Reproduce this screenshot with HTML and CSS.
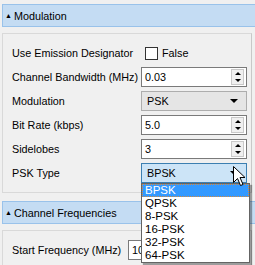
FILE: index.html
```html
<!DOCTYPE html>
<html lang="en">
<head>
  <meta charset="UTF-8">
  <title>Property Grid</title>
  <link rel="stylesheet" href="styles.css">
</head>
<body>
  <div class="grid">
    <div class="section-head"><span class="arrow">&#9650;</span>Modulation</div>
    <div class="section-body">
      <div class="row">
        <span class="label">Use Emission Designator</span>
        <div class="field check-field"><span class="check"></span>False</div>
      </div>
      <div class="row">
        <span class="label">Channel Bandwidth (MHz)</span>
        <div class="field spin"><span class="value">0.03</span><span class="spin-btn"><i class="up"></i><i class="down"></i></span></div>
      </div>
      <div class="row">
        <span class="label">Modulation</span>
        <div class="field combo"><span class="value">PSK</span><i class="down"></i></div>
      </div>
      <div class="row">
        <span class="label">Bit Rate (kbps)</span>
        <div class="field spin"><span class="value">5.0</span><span class="spin-btn"><i class="up"></i><i class="down"></i></span></div>
      </div>
      <div class="row">
        <span class="label">Sidelobes</span>
        <div class="field spin"><span class="value">3</span><span class="spin-btn"><i class="up"></i><i class="down"></i></span></div>
      </div>
      <div class="row">
        <span class="label">PSK Type</span>
        <div class="field combo active"><span class="value">BPSK</span><i class="down"></i>
          <ul class="popup">
            <li class="selected">BPSK</li>
            <li>QPSK</li>
            <li>8-PSK</li>
            <li>16-PSK</li>
            <li>32-PSK</li>
            <li>64-PSK</li>
          </ul>
          <svg class="cursor" width="13" height="20" viewBox="0 0 13 20">
            <path d="M0.5 0.5 L0.5 16.5 L4.5 12.5 L7.5 19.5 L10 18.5 L7 11.5 L12 11.5 Z" fill="#fff" stroke="#000" stroke-width="1"/>
          </svg>
        </div>
      </div>
    </div>
    <div class="section-head"><span class="arrow">&#9650;</span>Channel Frequencies</div>
    <div class="section-body">
      <div class="row">
        <span class="label short">Start Frequency (MHz)</span>
        <div class="field spin"><span class="value">10</span><span class="spin-btn"><i class="up"></i><i class="down"></i></span></div>
      </div>
    </div>
  </div>
</body>
</html>
```

FILE: styles.css
```css
body {
  margin: 0;
  background: #f0f0f0;
  font-family: "Liberation Sans", Arial, sans-serif;
  font-size: 10.8px;
  color: #000;
  overflow: hidden;
}
.grid {
  padding: 4px 0 0 2px;
  width: 253px;
}
.section-head {
  height: 21px;
  line-height: 21px;
  background: #c4dcf3;
  border: 1px solid #99c2ea;
  border-right: none;
  padding-left: 2px;
  white-space: nowrap;
}
.arrow {
  font-size: 7px;
  vertical-align: 2px;
  margin-right: 2px;
}
.section-body {
  margin: 6px 3px 8px 0;
  border: 1px solid #d9d9d9;
  border-right-color: #c8c8c8;
  padding: 7px 0;
}
.row {
  display: flex;
  align-items: center;
  height: 24px;
  padding-left: 9px;
}
.label {
  flex: none;
  width: 129px;
  white-space: nowrap;
}
.label.short {
  width: 116px;
}
.field {
  position: relative;
  flex: none;
  width: 106px;
  height: 20px;
  box-sizing: border-box;
  display: flex;
  align-items: center;
}
.check-field {
  gap: 4px;
  padding-left: 4px;
}
.check {
  width: 13px;
  height: 13px;
  box-sizing: border-box;
  border: 1px solid #333;
  background: #fff;
}
.spin {
  background: #fff;
  border: 1px solid #7a7a7a;
  padding: 0 2px 0 3px;
}
.spin .value {
  flex: 1;
}
.spin-btn {
  width: 13px;
  height: 16px;
  box-sizing: border-box;
  border: 1px solid #c9c9c9;
  background: #f0f0f0;
  display: flex;
  flex-direction: column;
  align-items: center;
  justify-content: space-around;
}
.spin-btn .up, .spin-btn .down {
  display: block;
  width: 0;
  height: 0;
  border-left: 3px solid transparent;
  border-right: 3px solid transparent;
}
.up {
  border-bottom: 3px solid #000;
}
.down {
  border-top: 3px solid #000;
}
.combo {
  background: #e5e5e5;
  border: 1px solid #adadad;
  padding: 0 8px 0 5px;
}
.combo .value {
  flex: 1;
}
.combo .down {
  display: block;
  width: 0;
  height: 0;
  border-left: 4px solid transparent;
  border-right: 4px solid transparent;
  border-top: 4px solid #000;
}
.combo.active {
  background: #cce4f7;
  border-color: #3c7fb1;
}
.popup {
  position: absolute;
  left: -1px;
  top: 19px;
  width: 107px;
  margin: 0;
  padding: 0;
  list-style: none;
  background: #fff;
  border: 1px solid #646464;
  box-shadow: 2px 2px 1px rgba(0, 0, 0, 0.35);
  z-index: 2;
}
.popup li {
  height: 13px;
  line-height: 13px;
  padding-left: 3px;
  font-size: 11.5px;
}
.popup .selected {
  background: #3399ff;
  color: #fff;
  outline: 1px dotted #d98a3a;
  outline-offset: -1px;
}
.cursor {
  position: absolute;
  left: 91px;
  top: 2px;
  z-index: 3;
}
```
